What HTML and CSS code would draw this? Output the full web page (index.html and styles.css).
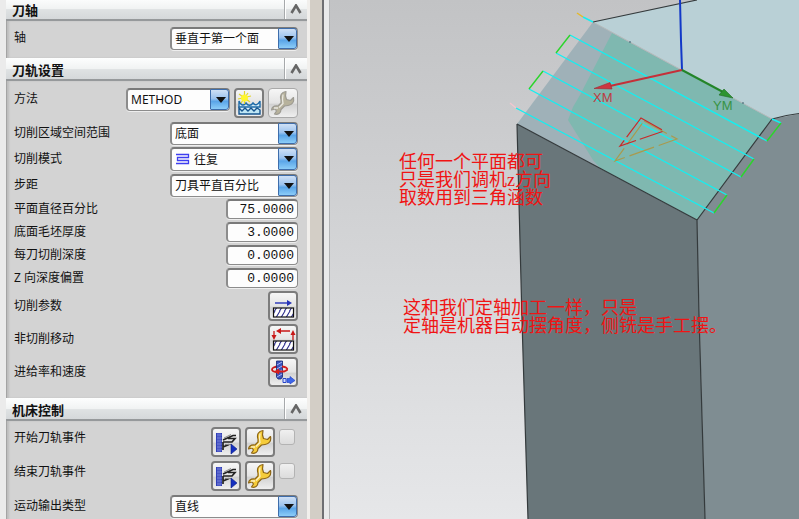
FILE: index.html
```html
<!DOCTYPE html>
<html lang="zh-CN">
<head>
<meta charset="utf-8">
<title>刀轨设置</title>
<link rel="stylesheet" href="styles.css">
</head>
<body>
<svg class="defs" aria-hidden="true">
  <defs>
    <pattern id="hatch" width="5" height="9" patternUnits="userSpaceOnUse">
      <path d="M-1 10L5 0M4 10L10 0M-6 10L0 0" stroke="#2c2c8c" stroke-width="1.1"/>
    </pattern>
    <symbol id="chevron" viewBox="0 0 12 10"><path d="M1.500 9L6 1.500L10.500 9" fill="none" stroke="#666" stroke-width="2.600"/></symbol>
    <symbol id="wrench" viewBox="0 0 26 26">
      <path d="M16 1.500C11.500 2 9.500 5.500 11 10L11 13L8 16C4.500 15.500 2 17 1.500 20L5 19L6.500 21L4.500 24C8 25 11 23 11 19.500L14.500 16L18 15.500C22 15 24.500 12 23.500 7.500L20.500 10.500L16.500 9.500L15.500 6Z" stroke-width="1.200" stroke-linejoin="round"/>
      <path d="M13 4.500L12.500 9.500L13 13.500L9 17.500M4 18H8" fill="none" stroke="#fff" stroke-opacity=".7" stroke-width="1.300"/>
    </symbol>
    <symbol id="event" viewBox="0 0 26 26">
      <path d="M3 4H9V23H3Z" fill="#2e3db5"/>
      <path d="M4 6H9M4 9H9M4 12H9M4 15H9M4 18H9M4 21H9M5 4V23M7 4V23" stroke="#8d99e8" stroke-width=".6"/>
      <path d="M10 11L20 6.500H23M15 9.500H22L19 13H10M10 13V21M10 18L16 15.500" fill="none" stroke="#222" stroke-width="1.700"/>
      <path d="M11 9L18 5.500M12 15.500H18" fill="none" stroke="#888" stroke-width="1"/>
      <path d="M18 15L24 20L18 25Z" fill="#1530c0" stroke="#0a1c80" stroke-width=".6"/>
    </symbol>
  </defs>
</svg>

<div class="app">
  <form class="panel">
    <section>
      <header class="bar"><h2>刀轴</h2><button type="button" class="fold" aria-label="折叠"><svg><use href="#chevron"/></svg></button></header>
      <div class="body">
        <div class="row"><label for="axis">轴</label>
          <span class="combo"><select id="axis"><option>垂直于第一个面</option></select></span></div>
      </div>
    </section>

    <section>
      <header class="bar"><h2>刀轨设置</h2><button type="button" class="fold" aria-label="折叠"><svg><use href="#chevron"/></svg></button></header>
      <div class="body body--path">
        <div class="row row--tools"><label for="method">方法</label>
          <span class="combo combo--method"><select id="method"><option>METHOD</option></select></span>
          <button type="button" class="tool" aria-label="新建方法"><svg viewBox="0 0 26 26">
            <path d="M3 12C5 16 8 16 10 13C12 17 15 17 17 13C19 17 22 16 24 12V24H3Z" fill="#e4f4fb"/>
            <path d="M3 17V11C5 16 8 16 10 13C12 16 15 16 17 13C19 16 22 15 24 11V17Z" fill="#d3ecf7" stroke="#1d6aa8" stroke-width="1.400"/>
            <path d="M3 24V18L6 21L9 18L12 21L15 18L18 21L21 18L24 20V24Z" fill="#bfe6f4" stroke="#17558e" stroke-width="1.400"/>
            <path d="M8.500 1V14M3 4L14 12M2 9L15 6M12 3L5 13" stroke="#e2d62b" stroke-width="1.200"/>
            <circle cx="8.500" cy="8" r="3.500" fill="#fff62e"/>
          </svg></button>
          <button type="button" class="tool tool--off" aria-label="编辑方法" disabled><svg class="wrench-off"><use href="#wrench"/></svg></button>
        </div>
        <div class="row"><label for="region">切削区域空间范围</label>
          <span class="combo"><select id="region"><option>底面</option></select></span></div>
        <div class="row"><label for="mode">切削模式</label>
          <span class="combo combo--icon"><select id="mode"><option>往复</option></select>
            <svg class="zigzag" viewBox="0 0 14 12"><path d="M0 1.500H12.500V4.500H1.500V7.500H12.500V10.500H0" fill="none" stroke="#3d3df0" stroke-width="1.300"/></svg></span></div>
        <div class="row"><label for="step">步距</label>
          <span class="combo"><select id="step"><option>刀具平直百分比</option></select></span></div>
        <div class="row"><label for="diameter">平面直径百分比</label><input class="number" id="diameter" type="text" value="75.0000"></div>
        <div class="row"><label for="stock">底面毛坯厚度</label><input class="number" id="stock" type="text" value="3.0000"></div>
        <div class="row"><label for="depth">每刀切削深度</label><input class="number" id="depth" type="text" value="0.0000"></div>
        <div class="row"><label for="offset">Z 向深度偏置</label><input class="number" id="offset" type="text" value="0.0000"></div>
        <div class="row"><label for="cut">切削参数</label>
          <button type="button" class="tool" id="cut"><svg viewBox="0 0 26 26">
            <path d="M5 10H18" stroke="#2633b8" stroke-width="1.400"/><path d="M17 7L22 10L17 13Z" fill="#2633b8"/>
            <rect x="3.500" y="15" width="20" height="9" fill="#fff"/><rect x="3.500" y="15" width="20" height="9" fill="url(#hatch)" stroke="#111" stroke-width="1.200"/>
          </svg></button></div>
        <div class="row"><label for="noncut">非切削移动</label>
          <button type="button" class="tool" id="noncut"><svg viewBox="0 0 26 26">
            <path d="M4 5V10M10 5H20M23 14V8" stroke="#c81818" stroke-width="1.300"/>
            <path d="M1.500 9H6.500L4 14ZM6 5L11 2V8ZM20.500 9L23 4L25.500 9Z" fill="#c81818"/>
            <rect x="3.500" y="15" width="20" height="9" fill="#fff"/><rect x="3.500" y="15" width="20" height="9" fill="url(#hatch)" stroke="#111" stroke-width="1.200"/>
          </svg></button></div>
        <div class="row"><label for="feed">进给率和速度</label>
          <button type="button" class="tool" id="feed"><svg viewBox="0 0 26 26">
            <path d="M9 7.500C4 7.500 2 9 2 10.500S5 13 8 13" fill="none" stroke="#c81818" stroke-width="1.800"/>
            <path d="M6.500 2H12.500V18L11 20H8L6.500 18Z" fill="#3a52bd" stroke="#142470" stroke-width=".8"/>
            <path d="M7 6L12 3M7 10L12 7M7 14L12 11M7 18L12 15" stroke="#a9b6f2"/>
            <path d="M12 7.500C16 8 18 9 17 11L14 12.500H6" fill="none" stroke="#d41f1f" stroke-width="1.800"/><path d="M9 9.500V15.500L4 12.500Z" fill="#d41f1f"/>
            <path d="M13 19.500H16V23.500H13Z" fill="#d5dcff" stroke="#2846c8"/><path d="M17 19.500H20V17.500L25 21.500L20 25V23.500H17Z" fill="#3d66e8" stroke="#2846c8" stroke-width=".7"/>
          </svg></button></div>
      </div>
    </section>

    <section>
      <header class="bar"><h2>机床控制</h2><button type="button" class="fold" aria-label="折叠"><svg><use href="#chevron"/></svg></button></header>
      <div class="body">
        <div class="row row--tools"><label for="start">开始刀轨事件</label>
          <button type="button" class="tool" aria-label="开始事件"><svg><use href="#event"/></svg></button>
          <button type="button" class="tool" aria-label="编辑开始事件"><svg class="wrench-on"><use href="#wrench"/></svg></button>
          <input type="checkbox" id="start"></div>
        <div class="row row--tools"><label for="end">结束刀轨事件</label>
          <button type="button" class="tool" aria-label="结束事件"><svg><use href="#event"/></svg></button>
          <button type="button" class="tool" aria-label="编辑结束事件"><svg class="wrench-on"><use href="#wrench"/></svg></button>
          <input type="checkbox" id="end"></div>
        <div class="row"><label for="output">运动输出类型</label>
          <span class="combo"><select id="output"><option>直线</option></select></span></div>
      </div>
    </section>
  </form>

  <div class="rail"></div>

  <main class="view">
    <svg class="model" viewBox="330 0 469 519" preserveAspectRatio="xMinYMin slice" role="img" aria-label="刀轨">
      <polygon points="593,22 697,0 799,0 799,114 772,119" fill="#b9d0d6"/>
      <polygon points="697,220 772,119 799,114 799,519 705,519" fill="#7f8d92"/>
      <polygon points="517,124 697,220 705,519 528,519 522,320" fill="#69767a"/>
      <polygon points="593,22 772,119 697,220 517,124" fill="#9fb1b8"/>
      <polygon points="612,33 772,119 697,220 601,169 593,160 568,120 573,107 580,95 596,64" fill="#7fb8b0"/>
      <path d="M593 22L772 119" stroke="#b4babb"/>
      <g fill="none" stroke="#343a3c" stroke-width="1.200">
        <path d="M593 22L697 0M772 119Q786 115 799 113.500"/>
        <path d="M517 124L697 220L772 119M517 124L522 320L528 519M697 220L699 315L705 519"/>
      </g>
      <g fill="none" stroke="#12f0f2" stroke-width="1.400">
        <path d="M583 17L593 22M772 119L781 123M570 35L767 141M556 53L754 159M543 71L741 177M529 89L727 195M516 108L714 213"/>
      </g>
      <path d="M570 35L556 53M543 71L529 89M781 123L767 141M754 159L741 177M727 195L714 213" stroke="#2bd52b" stroke-width="1.400"/>
      <path d="M577 13L583 17" stroke="#e5b929" stroke-width="1.500"/>
      <path d="M510 103L516 108" stroke="#f3c6cf" stroke-width="1.300"/>
      <path d="M644 121L677 139L615 161Z" fill="none" stroke="#a99a4d" stroke-width="1.200" stroke-dasharray="26 5"/>
      <path d="M641 118L664 131L620 146Z" fill="none" stroke="#c92828" stroke-width="1.200" stroke-dasharray="24 4"/>
      <path d="M680 0L681 41L682 70" fill="none" stroke="#1238c8" stroke-width="2"/>
      <path d="M682 70L610 86" stroke="#c52f38" stroke-width="2"/>
      <path d="M594 88.500L610 82.500L612 89Z" fill="#cd3540" stroke="#9c2931" stroke-width=".6"/>
      <path d="M682 70L723 92" stroke="#238529" stroke-width="2"/>
      <path d="M733 98L719 95L724 89Z" fill="#2c9430" stroke="#1e6d23" stroke-width=".6"/>
      <path d="M629 42h2M742 103h2" stroke="#36606e"/>
      <text x="593" y="102" class="axis-x">XM</text>
      <text x="713" y="110" class="axis-y">YM</text>
    </svg>
    <p class="note note--top">任何一个平面都可<br>只是我们调机z方向<br>取数用到三角涵数</p>
    <p class="note note--bottom">这和我们定轴加工一样，只是<br>定轴是机器自动摆角度，侧铣是手工摆。</p>
  </main>
</div>
</body>
</html>
```
FILE: styles.css
```css
* { box-sizing: border-box; }

body {
  margin: 0;
  overflow: hidden;
  background: #ebebeb;
  color: #111;
  font: 12px/20px "Noto Sans", "Noto Sans CJK SC", sans-serif;
}

.defs { position: absolute; width: 0; height: 0; }

.app { display: flex; height: 100vh; }

/* Dialog panel, scrolled slightly past its first header */
.panel {
  flex: 0 0 307px;
  margin-top: -2px;
  padding-left: 6px;
}

.bar {
  display: flex;
  align-items: stretch;
  height: 23px;
  padding-left: 6px;
  border-bottom: 2px solid #96999b;
  background: linear-gradient(#fdfefe, #f1f3f3 50%, #dfe2e3 55%, #d5d8da);
}

.bar h2 {
  flex: 1;
  margin: 0;
  font-size: 13px;
  line-height: 24px;
  font-weight: 700;
}

.fold {
  display: grid;
  place-items: center;
  width: 23px;
  padding: 0;
  border: 0;
  border-left: 1px solid #a6a9ab;
  box-shadow: inset 1px 0 #fff;
  background: none;
}

.fold svg { width: 12px; height: 10px; }

.body {
  display: flex;
  flex-direction: column;
  gap: 3px;
  padding: 6px 9px 9px 7px;
  border-left: 1px solid #a4a4a4;
  background: #d3d3d3;
  box-shadow: inset 2px 0 2px #bdbdbd;
}

.body--path { padding-top: 7px; padding-bottom: 11px; }

.row { display: flex; align-items: center; gap: 4px; }
.row label { flex: 1; line-height: 22px; white-space: nowrap; }
.row:has(.number) { height: 20px; }
.row--tools { align-items: flex-start; min-height: 31px; }

.combo { display: grid; width: 128px; height: 22px; }
.combo--method { width: 104px; }
.combo--icon { height: 24px; }

.combo > *, .combo::before, .combo::after { grid-area: 1 / 1; }

.combo select,
.number {
  border: 1px solid #8c8c8c;
  border-top: 2px solid #7a7a7a;
  border-left: 2px solid #8c8c8c;
  border-radius: 4px;
  box-shadow: 0 1px #eee;
  background: #fdfdfd;
  color: #111;
}

.combo select {
  appearance: none;
  width: 100%;
  height: 100%;
  padding: 0 18px 0 3px;
  font: inherit;
}

.combo--icon select { padding-left: 22px; }

/* Drop-down button and its arrow */
.combo::after {
  content: "";
  justify-self: end;
  width: 17px;
  margin: 1px 1px 1px 0;
  border: 1px solid #3e6dab;
  border-radius: 1px 3px 3px 1px;
  background: linear-gradient(#cfe0f5, #9cc3ee 45%, #5aa5e8 60%, #8ccdf8);
  pointer-events: none;
}

.combo::before {
  content: "";
  z-index: 1;
  justify-self: end;
  align-self: center;
  margin-right: 4px;
  border: 5px solid transparent;
  border-top: 6px solid #111;
  border-bottom: 0;
  pointer-events: none;
}

.zigzag {
  align-self: center;
  width: 14px;
  height: 12px;
  margin-left: 6px;
  pointer-events: none;
}

.number {
  width: 72px;
  height: 20px;
  padding: 0 3px;
  font: 13px "Liberation Mono", monospace;
  text-align: right;
}

.tool {
  width: 30px;
  height: 30px;
  padding: 0;
  border: 2px solid #7c7c7c;
  border-radius: 4px;
  background: linear-gradient(#f6f6f6, #e4e4e4 50%, #d2d2d2 55%, #efefef);
}

.tool--off { border: 1px solid #a9a9a9; }
.tool svg { display: block; width: 26px; height: 26px; margin: auto; }
.wrench-on { fill: #f5cc3a; stroke: #8c6516; }
.wrench-off { fill: #b7b29c; stroke: #9c9a92; }

input[type="checkbox"] {
  appearance: none;
  width: 16px;
  height: 16px;
  margin: 2px 3px 0 0;
  border: 1px solid #b3b3b3;
  border-radius: 3px;
  background: linear-gradient(#f0f0f0, #dcdcdc);
}

/* Dialog edge and window splitter */
.rail {
  flex: 0 0 23px;
  background: linear-gradient(90deg,
    #f1efec 3px, #d3cec6 3px 15px,
    #6e6e72 15px 17px, #e9e9ea 17px 22px, #b4b5b7 22px);
}

.view {
  position: relative;
  flex: 1;
  min-width: 0;
  overflow: hidden;
  background: linear-gradient(#c2c3c5, #e6e7e9);
}

.model { display: block; width: 100%; height: 100%; }
.axis-x, .axis-y { font: 13px "Liberation Sans", sans-serif; }
.axis-x { fill: #bd3b42; }
.axis-y { fill: #379344; }

.note {
  position: absolute;
  margin: 0;
  color: #f01414;
  font: 18px/18px "Liberation Serif", "Noto Sans CJK SC", serif;
  white-space: nowrap;
}

.note--top { left: 69px; top: 153px; }
.note--bottom { left: 73px; top: 299px; }
```
